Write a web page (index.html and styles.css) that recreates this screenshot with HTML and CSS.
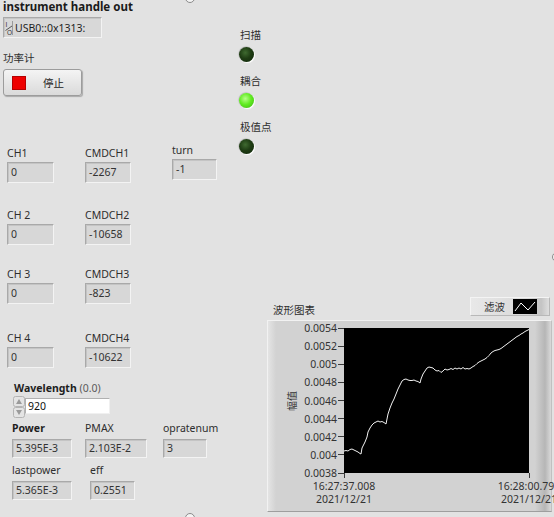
FILE: index.html
```html
<!DOCTYPE html>
<html lang="zh">
<head>
<meta charset="utf-8">
<title>功率计</title>
<link rel="stylesheet" href="styles.css">
</head>
<body>
<div class="panel">
  <section class="left">
    <div class="title">instrument handle out</div>
    <div class="visa">
      <svg class="io" width="8" height="16" viewBox="0 0 8 16">
        <text x="0.5" y="6.5" font-size="6.5" font-family="Liberation Sans, sans-serif" fill="#333">I</text>
        <line x1="0.5" y1="10.5" x2="7" y2="6" stroke="#333" stroke-width="0.8"/>
        <text x="2" y="15" font-size="6.5" font-family="Liberation Sans, sans-serif" fill="#333">O</text>
        <line x1="7.5" y1="1" x2="7.5" y2="15" stroke="#9a9a9a" stroke-width="1"/>
      </svg>
      <span class="visa-text">USB0::0x1313:</span>
    </div>
    <div class="lbl pm">功率计</div>
    <button class="stop"><span class="red"></span><span class="stop-text">停止</span></button>

    <div class="ch-grid">
      <div class="cell"><div class="lbl">CH1</div><div class="num w47">0</div></div>
      <div class="cell"><div class="lbl">CMDCH1</div><div class="num w46">-2267</div></div>
      <div class="cell turn"><div class="lbl">turn</div><div class="num w45">-1</div></div>

      <div class="cell"><div class="lbl">CH 2</div><div class="num w47">0</div></div>
      <div class="cell"><div class="lbl">CMDCH2</div><div class="num w46">-10658</div></div>
      <div class="cell"></div>

      <div class="cell"><div class="lbl">CH 3</div><div class="num w47">0</div></div>
      <div class="cell"><div class="lbl">CMDCH3</div><div class="num w46">-823</div></div>
      <div class="cell"></div>

      <div class="cell"><div class="lbl">CH 4</div><div class="num w47">0</div></div>
      <div class="cell"><div class="lbl">CMDCH4</div><div class="num w46">-10622</div></div>
      <div class="cell"></div>
    </div>

    <div class="lbl wl-label"><b>Wavelength</b> <span class="unit">(0.0)</span></div>
    <div class="wl-ctrl">
      <svg class="spin" width="12" height="22" viewBox="0 0 12 22">
        <rect x="0.5" y="0.5" width="11" height="10" rx="2" fill="#e4e4e4" stroke="#b4b4b4"/>
        <rect x="0.5" y="11.5" width="11" height="10" rx="2" fill="#e4e4e4" stroke="#b4b4b4"/>
        <path d="M3 8 L6 3 L9 8 Z" fill="#9a9a9a"/>
        <path d="M3 14 L6 19 L9 14 Z" fill="#9a9a9a"/>
      </svg>
      <div class="wl-input">920</div>
    </div>

    <div class="out-row r1">
      <div class="cell"><div class="lbl"><b>Power</b></div><div class="num w60">5.395E-3</div></div>
      <div class="cell"><div class="lbl">PMAX</div><div class="num w62">2.103E-2</div></div>
      <div class="cell"><div class="lbl">opratenum</div><div class="num w44">3</div></div>
    </div>
    <div class="out-row r2">
      <div class="cell"><div class="lbl">lastpower</div><div class="num w60">5.365E-3</div></div>
      <div class="cell"><div class="lbl">eff</div><div class="num w45">0.2551</div></div>
    </div>
  </section>

  <section class="right">
    <div class="leds">
      <div class="led-item"><div class="lbl">扫描</div><div class="led off"></div></div>
      <div class="led-item"><div class="lbl">耦合</div><div class="led on"></div></div>
      <div class="led-item"><div class="lbl">极值点</div><div class="led off"></div></div>
    </div>

    <div class="chart">
      <div class="chart-head">
        <div class="lbl chart-title">波形图表</div>
        <div class="legend">
          <span class="legend-name">滤波</span>
          <svg class="legend-icon" width="24" height="15" viewBox="0 0 24 15">
            <rect x="0" y="0" width="24" height="15" fill="#000"/>
            <polyline points="2,12 8,4 15,11 22,3" fill="none" stroke="#fff" stroke-width="1"/>
          </svg>
        </div>
      </div>
      <div class="frame">
        <div class="yaxis">
          <div class="ytitle">幅值</div>
          <div class="yticks">
            <span>0.0054</span><span>0.0052</span><span>0.005</span><span>0.0048</span><span>0.0046</span><span>0.0044</span><span>0.0042</span><span>0.004</span><span>0.0038</span>
          </div>
        </div>
        <div class="plot">
          <svg width="185" height="145" viewBox="0 0 185 145">
            <polyline fill="none" stroke="#f2f2f2" stroke-width="1"
              points="0,123 2,122.5 4,123 6,121.5 8,121 10,122 12,123 14,124 16,125.5 17,126 18,120 19,118 21,114 23,109 24,104 26,100 28,97 30,95 32,94 34,93 36,94 38,93.5 40,94.5 42,96 43,91 44,86 46,80 48,75 50,71 52,66 54,61 56,57 58,53 60,51.5 62,51 64,52 66,52.5 68,52.5 70,52 72,53 74,53.5 76,55 77,51 79,46 81,43 83,40 85,39 87,39.5 89,40 91,42 93,43 95,42.5 97,44.5 99,43 101,41 103,42 105,41.5 107,40.5 109,41.5 111,40 113,41 115,40 117,41 119,39.5 121,41 123,40.5 125,41 127,40 129,38.5 131,37.5 133,35.5 135,34 137,33 139,32 141,31 143,29.5 145,27.5 147,25 149,23.5 151,22.5 153,22 155,21.5 157,20.5 159,19 161,17.5 163,16 165,14.5 167,13 169,11.5 171,10 173,8.5 175,7.5 177,6 179,5 181,3.5 183,2.5 185,1.5"/>
          </svg>
        </div>
        <div class="xaxis">
          <div class="xl">16:27:37.008<br>2021/12/21</div>
          <div class="xl">16:28:00.792<br>2021/12/21</div>
        </div>
      </div>
    </div>
  </section>
</div>
<span class="handle h-top"></span>
<span class="handle h-bottom"></span>
<span class="handle h-right"></span>
</body>
</html>
```

FILE: styles.css
```css
* { box-sizing: border-box; }
html, body { margin: 0; padding: 0; }
body {
  width: 554px;
  height: 517px;
  overflow: hidden;
  position: relative;
  background: #e2e2e2;
  font-family: "Noto Sans", "Noto Sans CJK SC", sans-serif;
  font-size: 10.5px;
  color: #2c2c2c;
}
.panel { display: flex; height: 517px; }

/* ---------- left column ---------- */
.left { width: 237px; flex: none; padding-left: 3px; }
.title { font-weight: 700; font-size: 11.5px; line-height: 13px; color: #1a1a1a; white-space: nowrap; }
.lbl { line-height: 13px; height: 13px; white-space: nowrap; color: #2e2e2e; }
.lbl b { font-weight: 700; color: #1e1e1e; }

.visa {
  margin-top: 4px;
  width: 99px; height: 21px;
  display: flex; align-items: center;
  background: #d8d8d8;
  border: 1px solid; border-color: #a9a9a9 #f3f3f3 #f3f3f3 #a9a9a9;
  box-shadow: inset 1px 1px 0 #c6c6c6;
  padding-left: 1px;
}
.io { flex: none; }
.visa-text { margin-left: 2px; color: #1e1e1e; font-size: 10.5px; }

.pm { margin-top: 14px; }
.stop {
  display: flex; align-items: center;
  margin: 4px 0 0 0; padding: 0;
  width: 79px; height: 27px;
  background: linear-gradient(#f4f4f4, #dadada);
  border: 1px solid #9c9c9c;
  border-radius: 3px;
  box-shadow: 1px 1px 1px rgba(0,0,0,0.25);
  font: inherit; color: #222;
}
.red { width: 14px; height: 14px; margin-left: 8px; background: #ee0000; border: 1px solid #b50000; }
.stop-text { margin-left: 17px; font-size: 10.5px; }

.ch-grid {
  margin-top: 51px;
  margin-left: 4px;
  display: grid;
  grid-template-columns: 78px 87px 50px;
  grid-template-rows: 62px 59px 64px 36px;
}
.cell { display: flex; flex-direction: column; align-items: flex-start; }
.cell .num { margin-top: 2px; }
.turn { margin-top: -3px; }

.num {
  height: 21px;
  line-height: 18px;
  padding-left: 3px;
  background: #d7d7d7;
  border: 1px solid; border-color: #a9a9a9 #f3f3f3 #f3f3f3 #a9a9a9;
  box-shadow: inset 1px 1px 0 #c4c4c4;
  color: #333;
  white-space: nowrap;
}
.w44 { width: 44px; } .w45 { width: 45px; } .w46 { width: 46px; } .w47 { width: 47px; }
.w60 { width: 60px; } .w62 { width: 62px; }

.wl-label { margin-top: 14px; padding-left: 11px; }
.unit { color: #5a5a5a; }
.wl-ctrl { display: flex; align-items: flex-start; margin: 1px 0 0 10px; height: 22px; }
.spin { flex: none; }
.wl-input {
  margin-top: 2px;
  width: 85px; height: 16px; line-height: 14px;
  padding-left: 2px;
  background: #fff;
  border: 1px solid; border-color: #b0b0b0 #f0f0f0 #f0f0f0 #b0b0b0;
  color: #111;
}

.out-row { display: grid; padding-left: 9px; }
.out-row .num { height: 19px; line-height: 16px; margin-top: 4px; }
.r1 { margin-top: 4px; grid-template-columns: 73px 78px auto; }
.r2 { margin-top: 6px; grid-template-columns: 78px auto; }

/* ---------- right column ---------- */
.right { flex: 1; display: flex; flex-direction: column; min-width: 0; }
.leds { padding: 29px 0 0 3px; }
.led-item + .led-item { margin-top: 13px; }
.led {
  margin: 5px 0 0 -1px;
  width: 15px; height: 15px; border-radius: 50%;
  box-shadow: 1px 1px 1px #ffffff, -0.5px -0.5px 1px rgba(0,0,0,0.25);
}
.led.off { background: radial-gradient(circle at 42% 38%, #3f6a30 0, #1f3d14 45%, #10250a 100%); }
.led.on { background: radial-gradient(circle at 42% 38%, #b8ff8a 0, #62ec22 45%, #3bb511 100%); }

.chart { margin: auto 0 5px 30px; width: 285px; }
.chart-head { display: flex; justify-content: space-between; align-items: flex-end; height: 24px; }
.chart-title { padding-left: 6px; margin-bottom: 3px; }
.legend {
  display: flex; align-items: center;
  width: 80px; height: 19px;
  margin: 0 2px 4px 0;
  padding-left: 13px;
  background: linear-gradient(to right, #e8e8e8 0, #d9d9d9 70%, #c4c4c4 90%, #dedede 100%);
  border: 1px solid; border-color: #f4f4f4 #b8b8b8 #b8b8b8 #f4f4f4;
}
.legend-name { font-size: 10.5px; color: #333; }
.legend-icon { margin-left: 8px; }

.frame {
  height: 192px;
  display: grid;
  grid-template-columns: 76px 185px 1fr;
  grid-template-rows: 7px 145px 1fr;
  background: linear-gradient(to right, #e4e4e4 0, #d2d2d2 8px, #d2d2d2 calc(100% - 16px), #b6b6b6 calc(100% - 6px), #d9d9d9 100%);
  border: 1px solid; border-color: #f2f2f2 #c0c0c0 #9e9e9e #f2f2f2;
}
.yaxis { grid-column: 1; grid-row: 2; margin: -6px 0; display: flex; }
.ytitle {
  align-self: center;
  margin-left: 19px;
  writing-mode: vertical-rl;
  text-orientation: sideways;
  transform: rotate(180deg);
  font-size: 10px; line-height: 11px;
  color: #333;
}
.yticks {
  flex: 1;
  display: flex; flex-direction: column;
  justify-content: space-between; align-items: flex-end;
}
.yticks span { display: flex; align-items: center; line-height: 12px; height: 12px; color: #333; }
.yticks span::after { content: ""; width: 6px; height: 1px; margin-left: 1px; background: #3a3a3a; }
.plot { grid-column: 2; grid-row: 2; background: #000; }
.plot svg { display: block; }
.xaxis {
  grid-column: 2; grid-row: 3;
  margin: 0 -32px;
  display: flex; justify-content: space-between; align-items: flex-start;
}
.xl { width: 64px; text-align: center; line-height: 13px; color: #333; white-space: nowrap; }
.xl::before { content: ""; display: block; width: 1px; height: 5px; margin: 0 auto 2px; background: #3a3a3a; }

/* resize handles overlaid on the panel */
.handle {
  position: absolute;
  width: 10px; height: 10px; border-radius: 50%;
  border: 1px solid #8a8a8a; background: #f4f4f4;
}
.h-top { left: 185px; top: -7px; }
.h-bottom { left: 185px; top: 513px; }
.h-right { left: 552px; top: 252px; }
```
